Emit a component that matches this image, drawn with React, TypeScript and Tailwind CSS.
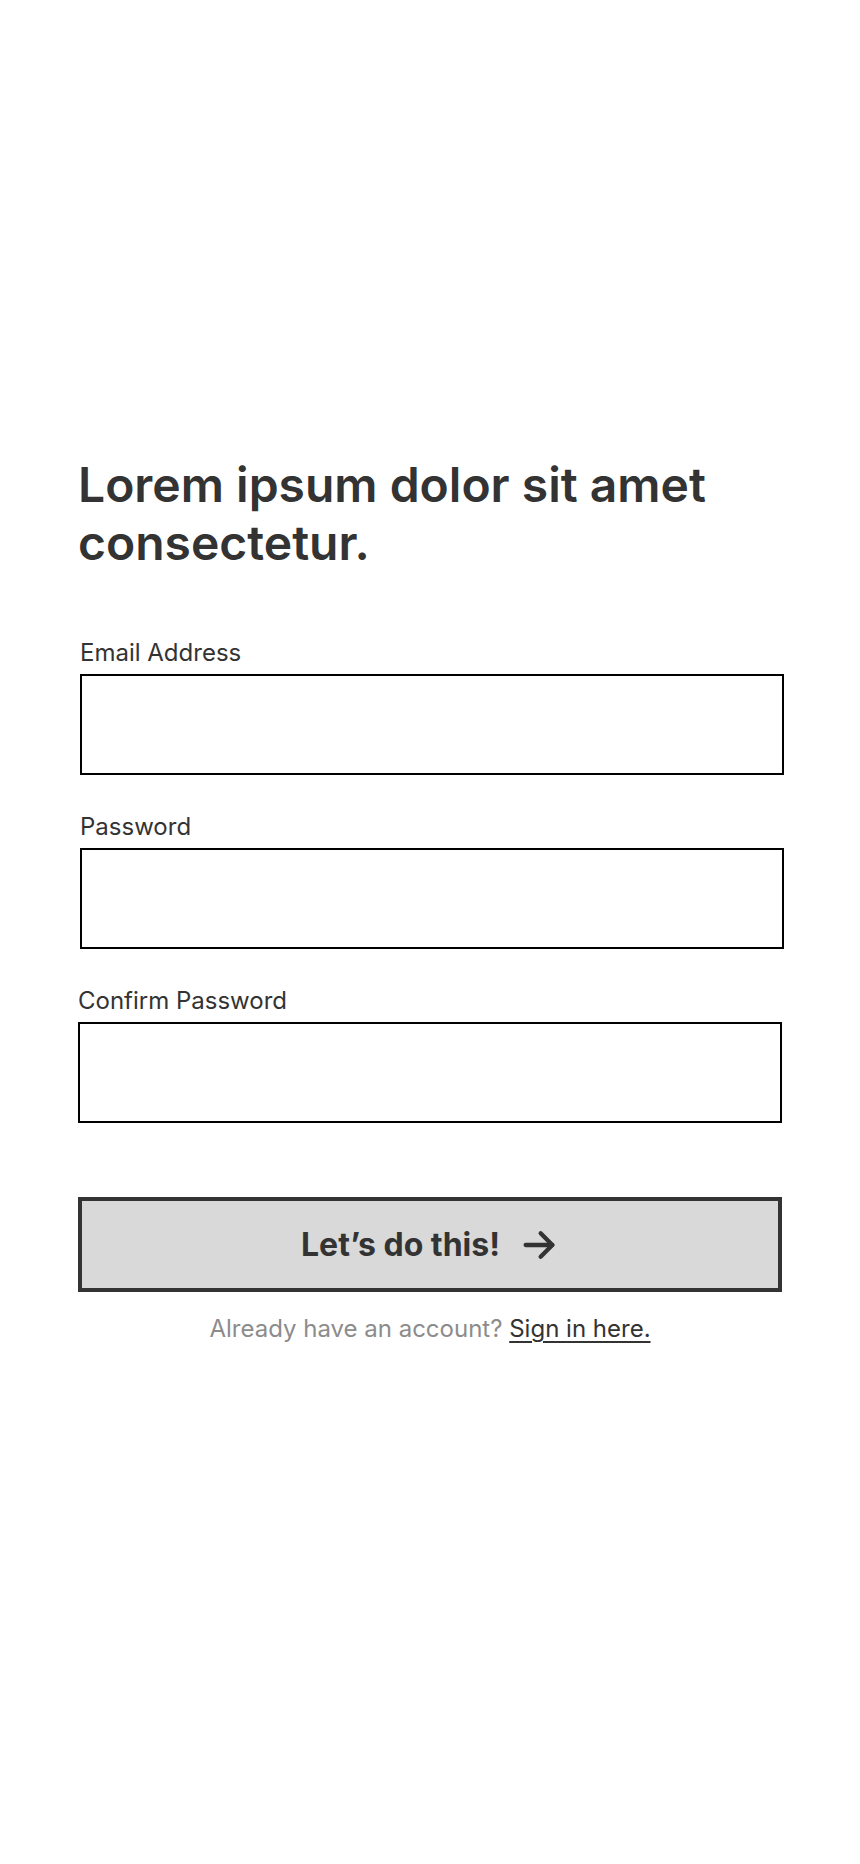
import React from "react";

function Field({ label, shift }: { label: string; shift?: boolean }) {
  return (
    <div className={shift ? "ml-[2px] flex flex-col" : "flex flex-col"}>
      <label className="text-[24px] leading-[27px] text-[#333333]">{label}</label>
      <div className="mt-[8px] h-[101px] w-[704px] border-2 border-black bg-white" />
    </div>
  );
}

export default function App() {
  return (
    <div
      className="min-h-[1864px] w-[860px] bg-white"
      style={{ fontFamily: "Inter, 'Noto Sans', sans-serif" }}
    >
      <div className="flex flex-col pl-[78px] pt-[456px]">
        <h1 className="w-[740px] text-[48px] font-semibold leading-[58px] text-[#333333]">
          Lorem ipsum dolor sit amet consectetur.
        </h1>
        <div className="mt-[67px] flex flex-col gap-[38px]">
          <Field label="Email Address" shift />
          <Field label="Password" shift />
          <Field label="Confirm Password" />
        </div>
        <button className="mt-[74px] flex h-[95px] w-[704px] items-center justify-center gap-[19px] border-4 border-[#333333] bg-[#d9d9d9] text-[32px] font-bold text-[#333333]">
          <span>Let’s do this!</span>
          <svg width="40" height="40" viewBox="0 0 24 24" fill="none" stroke="#333333" strokeWidth="2.6" strokeLinecap="round" strokeLinejoin="round">
            <path d="M4 12h16" />
            <path d="M13 5l7 7-7 7" />
          </svg>
        </button>
        <p className="mt-[22px] w-[704px] text-center text-[24px] leading-[29px] text-[#8c8c8c]">
          Already have an account?{" "}
          <a className="text-[#333333] underline underline-offset-4">Sign in here.</a>
        </p>
      </div>
    </div>
  );
}
